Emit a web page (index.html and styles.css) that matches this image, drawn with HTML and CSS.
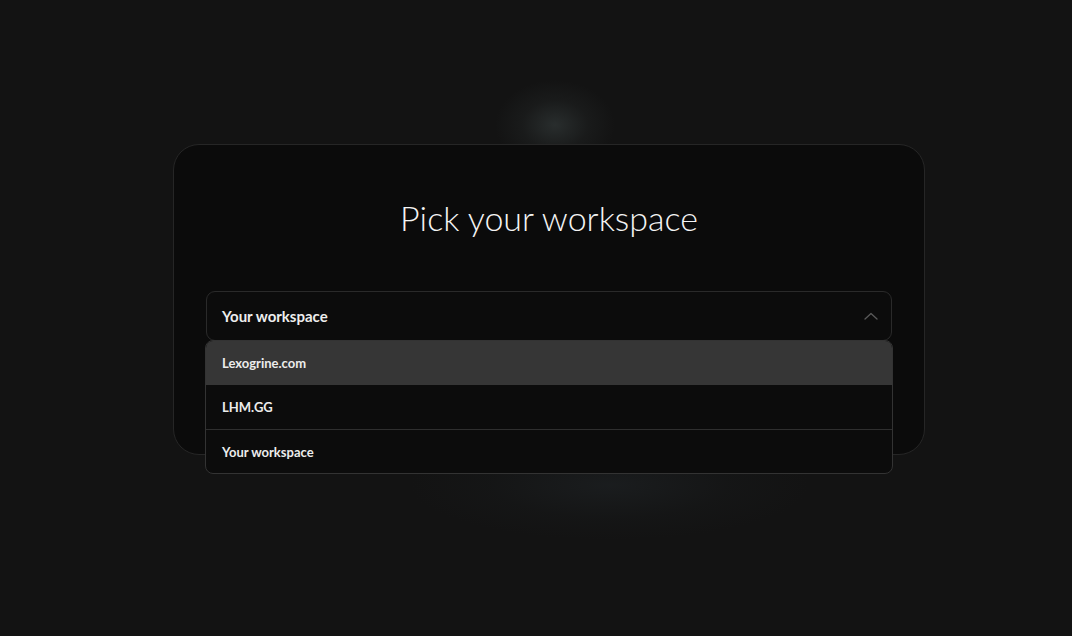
FILE: index.html
```
<!DOCTYPE html>
<html lang="en">
<head>
    <meta charset="UTF-8">
    <meta name="viewport" content="width=device-width, initial-scale=1.0">
    <title>Pick your workspace</title>
    <link rel="stylesheet" href="styles.css">
</head>
<body>
    <div class="page">
        <div class="glow glow-top"></div>
        <div class="glow glow-bottom"></div>

        <div class="card">
            <h1>Pick your workspace</h1>

            <div class="select">
                <div class="select-box">
                    <span>Your workspace</span>
                    <svg class="chevron" width="14" height="8" viewBox="0 0 14 8" fill="none">
                        <path d="M1 7L7 1.5L13 7" stroke="#5a5a5a" stroke-width="1.3" stroke-linecap="round" stroke-linejoin="round"/>
                    </svg>
                </div>

                <ul class="options">
                    <li class="option active">Lexogrine.com</li>
                    <li class="option">LHM.GG</li>
                    <li class="option">Your workspace</li>
                </ul>
            </div>
        </div>
    </div>
</body>
</html>
```

FILE: styles.css
```
* {
    box-sizing: border-box;
}

body {
    margin: 0;
    background-color: #131313;
    font-family: Lato, "Open Sans", sans-serif;
    color: #f2f2f2;
}

.page {
    position: relative;
    height: 636px;
    overflow: hidden;
    display: flex;
    justify-content: center;
    align-items: flex-start;
    padding-top: 144px;
    padding-left: 26px;
}

.glow {
    position: absolute;
    border-radius: 50%;
    pointer-events: none;
}

.glow-top {
    left: 495px;
    top: 80px;
    width: 120px;
    height: 90px;
    background: radial-gradient(closest-side, rgba(48, 54, 54, 0.75), rgba(40, 44, 44, 0.3) 55%, rgba(19, 19, 19, 0) 100%);
}

.glow-bottom {
    left: 410px;
    top: 430px;
    width: 400px;
    height: 110px;
    background: radial-gradient(closest-side, rgba(28, 31, 33, 0.8), rgba(24, 26, 27, 0.35) 60%, rgba(19, 19, 19, 0) 100%);
}

.card {
    position: relative;
    width: 752px;
    height: 311px;
    padding: 51px 32px 0;
    background-color: #0b0b0b;
    border: 1px solid #262626;
    border-radius: 26px;
}

h1 {
    margin: 0;
    text-align: center;
    font-size: 34px;
    font-weight: 300;
    line-height: 44px;
    color: #f4f4f4;
}

.select {
    position: relative;
    margin-top: 51px;
}

.select-box {
    display: flex;
    align-items: center;
    justify-content: space-between;
    height: 50px;
    padding: 0 13px 0 15px;
    background-color: #0c0c0c;
    border: 1px solid #2a2a2a;
    border-radius: 9px;
    font-size: 15px;
    font-weight: 700;
    color: #eeeeee;
}

.options {
    position: absolute;
    left: -1px;
    right: -1px;
    top: 49px;
    margin: 0;
    padding: 0;
    list-style: none;
    background-color: #0c0c0c;
    border: 1px solid #333;
    border-radius: 8px;
    overflow: hidden;
}

.option {
    height: 44px;
    padding: 0 16px;
    display: flex;
    align-items: center;
    font-size: 13px;
    font-weight: 700;
    color: #ececec;
}

.option + .option {
    border-top: 1px solid #2f2f2f;
}

.option.active {
    background-color: #363636;
}

.option.active + .option {
    border-top: none;
}
```
